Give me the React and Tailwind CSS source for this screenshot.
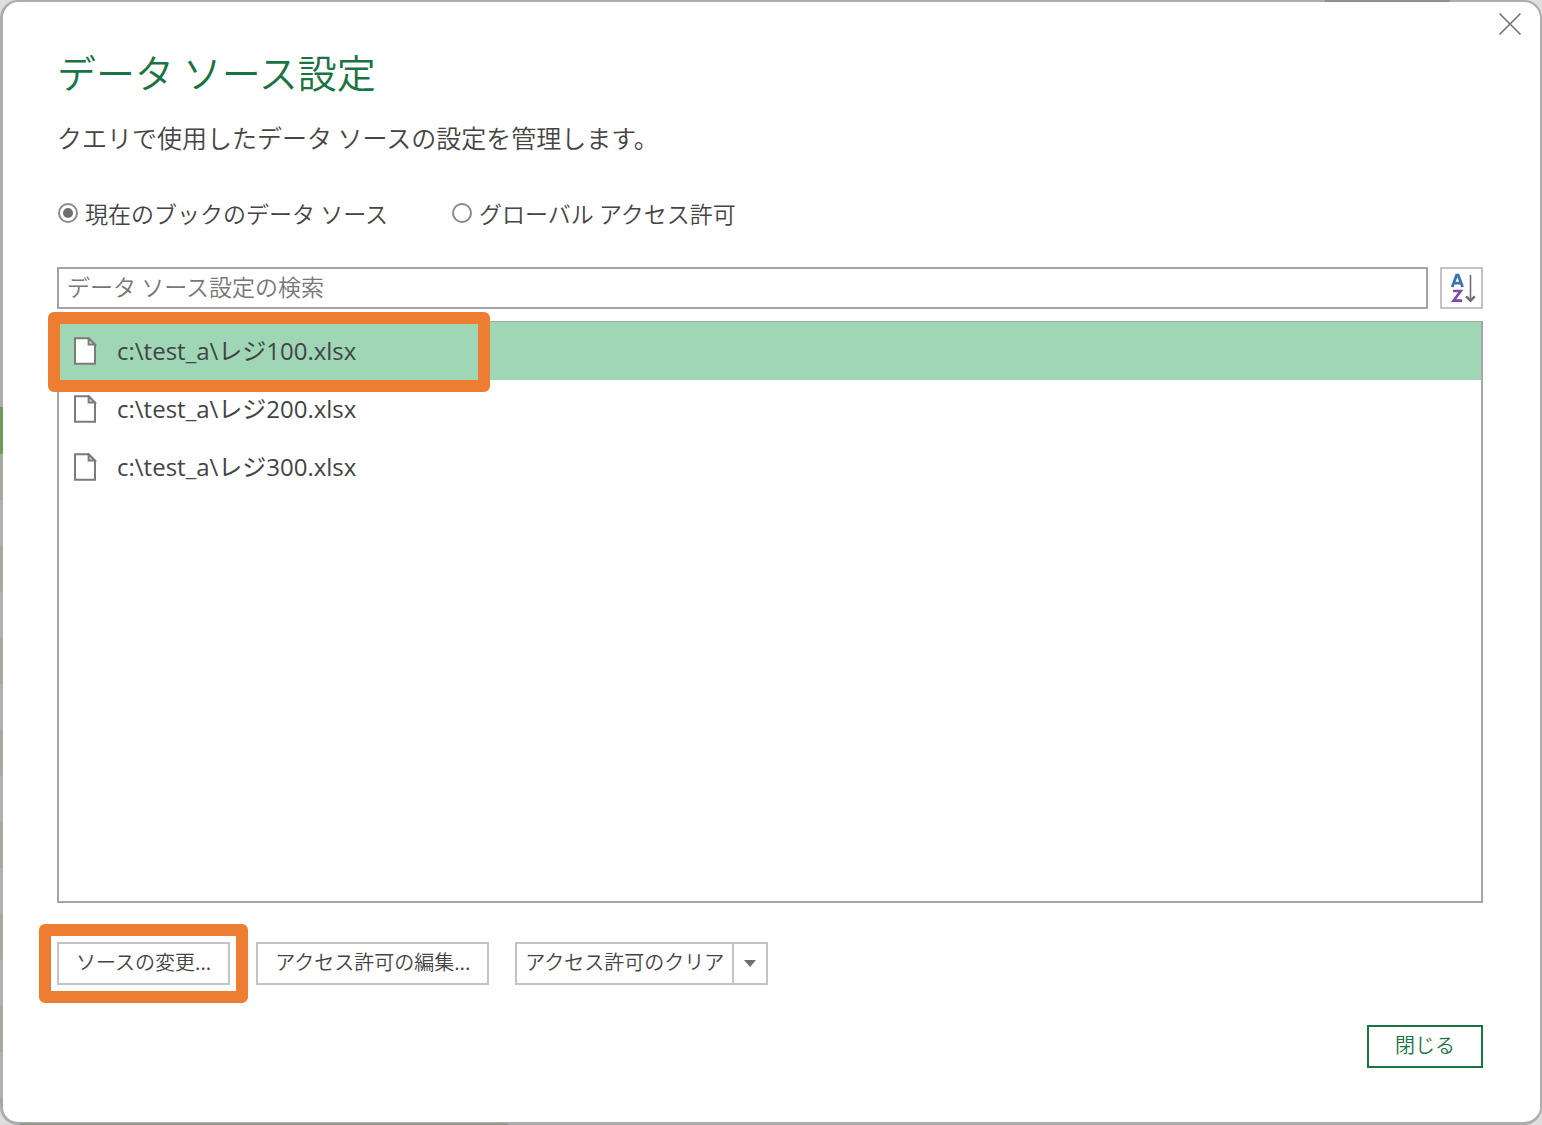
import React, { useState } from 'react';

const SOURCES = ['c:\\test_a\\レジ100.xlsx', 'c:\\test_a\\レジ200.xlsx', 'c:\\test_a\\レジ300.xlsx'];

// Banded worksheet rows that show along the left edge
const BANDS = Array.from({ length: 15 }, (_, i) => i % 2 === 0);

function CloseIcon() {
  return (
    <svg className="w-6 h-6" viewBox="0 0 24 24" fill="none" stroke="#757575" strokeWidth="1.7" aria-hidden="true">
      <path d="M1.5 1.5l21 21M22.5 1.5l-21 21" />
    </svg>
  );
}

function FileIcon() {
  return (
    <svg className="w-6 h-7 shrink-0" viewBox="0 0 24 28" fill="#fff" stroke="#7b7b7b" strokeWidth="2" aria-hidden="true">
      <path d="M2 1.2h13.6l6.4 6.4v19.2H2z" />
      <path d="M15.6 1.2v6.4H22z" fill="#dcdcdc" />
    </svg>
  );
}

function SortIcon() {
  return (
    <svg className="w-7 h-8" viewBox="0 0 28 32" fill="none" aria-hidden="true">
      <path d="M4.2 15L8.6 3.2h1.6L14.6 15M6.2 11.2h6.4" stroke="#3a73b4" strokeWidth="2.8" />
      <path d="M5 19h7.8L5.5 28.6h8.6" stroke="#8246af" strokeWidth="2.6" />
      <path d="M22.5 3v26" stroke="#6e6e6e" strokeWidth="1.6" />
      <path d="M18.2 24.4l4.3 4.3 4.3-4.3" stroke="#6e6e6e" strokeWidth="2.4" />
    </svg>
  );
}

function ScopeOption({ label, value, scope, onSelect }) {
  return (
    <label className="flex items-center gap-[7px]">
      <input
        type="radio"
        name="scope"
        value={value}
        checked={scope === value}
        onChange={() => onSelect(value)}
        className="size-5 appearance-none rounded-full border-2 border-[#8a8a8a] bg-white p-[3px] bg-clip-content
        checked:bg-[#6e6e6e]"
      />
      {label}
    </label>
  );
}

export default function App() {
  const [scope, setScope] = useState('book');
  const [query, setQuery] = useState('');
  const [selected, setSelected] = useState(0);

  return (
    <div className="relative flex min-h-screen bg-[#dedede] font-['Noto_Sans_CJK_JP',sans-serif] font-[350] text-[#444]">
      <main className="relative flex flex-1 flex-col rounded-[18px] border-2 border-l-3 border-b-3 border-[#adadad] bg-white pr-[57px] pl-[54px] pt-[41px] pb-[54px]">
        <button type="button" aria-label="閉じる" className="absolute top-[10px] right-[18px]">
          <CloseIcon />
        </button>

        <h1 className="text-[39px] leading-14 text-[#1a7343]">データ ソース設定</h1>
        <p className="mt-5 text-[25px] leading-9">クエリで使用したデータ ソースの設定を管理します。</p>

        <div className="mt-[42px] flex gap-16 pl-[1px] text-[23px] leading-8">
          <ScopeOption label="現在のブックのデータ ソース" value="book" scope={scope} onSelect={setScope} />
          <ScopeOption label="グローバル アクセス許可" value="global" scope={scope} onSelect={setScope} />
        </div>

        <div className="mt-[38px] flex gap-3">
          <input
            type="text"
            aria-label="データ ソース設定の検索"
            value={query}
            onChange={(e) => setQuery(e.target.value)}
            placeholder="データ ソース設定の検索"
            className="h-[42px] min-w-0 flex-1 border-2 border-[#a3a3a3] px-2 pb-1 text-[23px] leading-8 placeholder-[#777]"
          />
          <button
            type="button"
            aria-label="並べ替え"
            className="flex h-[42px] w-[43px] items-center justify-center border-2 border-[#c3c3c3]"
          >
            <SortIcon />
          </button>
        </div>

        {/* Source list */}
        <ul className="mt-3 flex-1 border-2 border-t border-[#a6a6a6] font-['Open_Sans','Noto_Sans_CJK_JP',sans-serif] font-normal">
          {SOURCES.map((name, i) => (
            <li key={name} className="relative">
              <button
                type="button"
                onClick={() => setSelected(i)}
                className={`flex h-[58px] w-full items-center gap-5 px-[14px] text-left text-[24px] leading-8
                ${selected === i ? 'bg-[#9ed6b6]' : 'bg-white'}`}
              >
                <FileIcon />
                <span>{name}</span>
              </button>
              {i === 0 && (
                <div className="pointer-events-none absolute -top-[10px] -left-[11px] z-10 h-20 w-[442px] rounded-md border-[12px] border-[#ed7d31]" />
              )}
            </li>
          ))}
        </ul>

        {/* Actions */}
        <div className="mt-[39px] flex items-start gap-[26px] text-[20px] leading-8">
          <div className="relative">
            <button type="button" className="h-[43px] border-2 border-[#c3c3c3] px-[17px] pb-1">ソースの変更...</button>
            <div className="pointer-events-none absolute -inset-[18px] rounded-md border-[12px] border-[#ed7d31]" />
          </div>
          <button type="button" className="h-[43px] border-2 border-[#c3c3c3] px-[17px] pb-1">アクセス許可の編集...</button>
          <div className="flex h-[43px] border-2 border-[#c3c3c3]">
            <button type="button" className="px-2 pb-1">アクセス許可のクリア</button>
            <button
              type="button"
              aria-label="その他のオプション"
              className="flex w-[34px] items-center justify-center border-l-2 border-[#c3c3c3]"
            >
              <svg className="w-3 h-[7px]" viewBox="0 0 12 7" fill="#6e6e6e" aria-hidden="true">
                <path d="M0 0h12L6 7z" />
              </svg>
            </button>
          </div>
        </div>

        <div className="mt-10 flex justify-end">
          <button type="button" className="h-[43px] w-[116px] border-2 border-[#1a7343] pb-1 text-[20px] leading-8 text-[#1a7343]">
            閉じる
          </button>
        </div>
      </main>

      {/* Worksheet edges around the dialog */}
      <div className="pointer-events-none absolute top-[407px] bottom-5 left-0 w-[3px] overflow-hidden">
        <div className="h-[47px] bg-[#6f9a5c]" />
        {BANDS.map((green, i) => (
          <div key={i} className={`h-[46px] border-b border-[#9bb08f] ${green ? 'bg-[#a3ab9e]' : 'bg-[#b0aeb0]'}`} />
        ))}
      </div>
      <div className="pointer-events-none absolute top-0 right-[92px] h-[2px] w-[125px] bg-[#8f8f8f]" />
      <div className="pointer-events-none absolute bottom-0 left-5 h-[2px] w-[488px] bg-[#959c8e]" />
    </div>
  );
}
